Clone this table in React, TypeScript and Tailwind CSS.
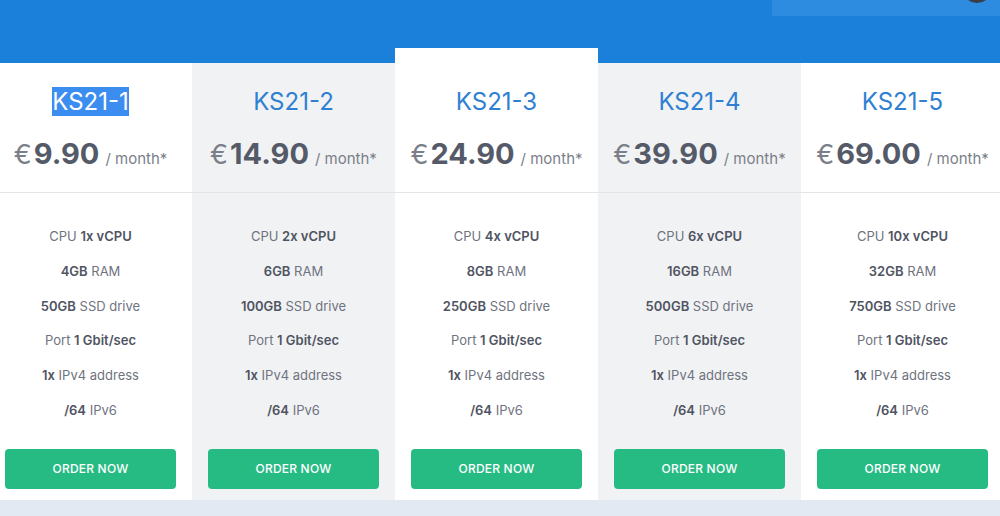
import { Fragment } from "react";

type Plan = {
  name: string;
  price: string;
  cpu: string;
  ram: string;
  disk: string;
  featured?: boolean;
  tint?: boolean;
  selected?: boolean;
};

const plans: Plan[] = [
  { name: "KS21-1", price: "9.90", cpu: "1x vCPU", ram: "4GB", disk: "50GB", selected: true },
  { name: "KS21-2", price: "14.90", cpu: "2x vCPU", ram: "6GB", disk: "100GB", tint: true },
  { name: "KS21-3", price: "24.90", cpu: "4x vCPU", ram: "8GB", disk: "250GB", featured: true },
  { name: "KS21-4", price: "39.90", cpu: "6x vCPU", ram: "16GB", disk: "500GB", tint: true },
  { name: "KS21-5", price: "69.00", cpu: "10x vCPU", ram: "32GB", disk: "750GB" },
];

function Feature({ children }: { children: React.ReactNode }) {
  return <li className="h-[34.8px] leading-[34.8px] text-[13px] text-[#6f7380]">{children}</li>;
}

function B({ children }: { children: React.ReactNode }) {
  return <b className="font-semibold text-[#4f5462]">{children}</b>;
}

function PlanCard({ plan }: { plan: Plan }) {
  return (
    <div
      className={
        "w-[203px] shrink-0 flex flex-col " +
        (plan.tint ? "bg-[#f1f2f3] " : "bg-white ") +
        (plan.featured ? "relative z-10 -mt-[15px] pt-[15px]" : "")
      }
    >
      <div className="h-[129px] flex flex-col items-center">
        <h3 className="mt-[23px] h-[32px] text-[24px] leading-[32px] text-[#2f80d3]">
          {plan.selected ? <span className="bg-[#3b8df0] text-white">{plan.name}</span> : plan.name}
        </h3>
        <div className="mt-[14px] flex items-baseline">
          <span className="text-[27px] text-[#7b7f8a] mr-[2px]">€</span>
          <span className="text-[29px] font-bold text-[#555a68]">{plan.price}</span>
          <span className="ml-[6px] text-[15px] text-[#7b7f8a]">/ month*</span>
        </div>
      </div>
      <ul className="pt-[27px] flex flex-col items-center">
        <Feature>
          CPU <B>{plan.cpu}</B>
        </Feature>
        <Feature>
          <B>{plan.ram}</B> RAM
        </Feature>
        <Feature>
          <B>{plan.disk}</B> SSD drive
        </Feature>
        <Feature>
          Port <B>1 Gbit/sec</B>
        </Feature>
        <Feature>
          <B>1x</B> IPv4 address
        </Feature>
        <Feature>
          <B>/64</B> IPv6
        </Feature>
      </ul>
      <div className="px-[16px] pt-[21px] pb-[11px]">
        <button className="w-full h-[40px] rounded-[4px] bg-[#27bb84] text-white text-[12px] font-medium tracking-[0.2px]">
          ORDER NOW
        </button>
      </div>
    </div>
  );
}

export default function App() {
  return (
    <div
      className="w-[1000px] h-[516px] overflow-hidden bg-[#e2e9f3] relative"
      style={{ fontFamily: "Inter, 'Noto Sans', sans-serif" }}
    >
      <div className="h-[63px] bg-[#1a80da] relative">
        <div className="absolute right-0 top-0 w-[228px] h-[16px] bg-[#2d8be0]">
          <div className="absolute right-[8px] -top-[28px] w-[30px] h-[31px] rounded-full bg-[#3a3d44]" />
        </div>
      </div>
      <div className="relative">
        <div className="flex -ml-[11px]">
          {plans.map((p) => (
            <Fragment key={p.name}>
              <PlanCard plan={p} />
            </Fragment>
          ))}
        </div>
        <div className="absolute left-0 right-0 top-[129px] h-px bg-[#e3e5e8] z-20" />
      </div>
    </div>
  );
}
